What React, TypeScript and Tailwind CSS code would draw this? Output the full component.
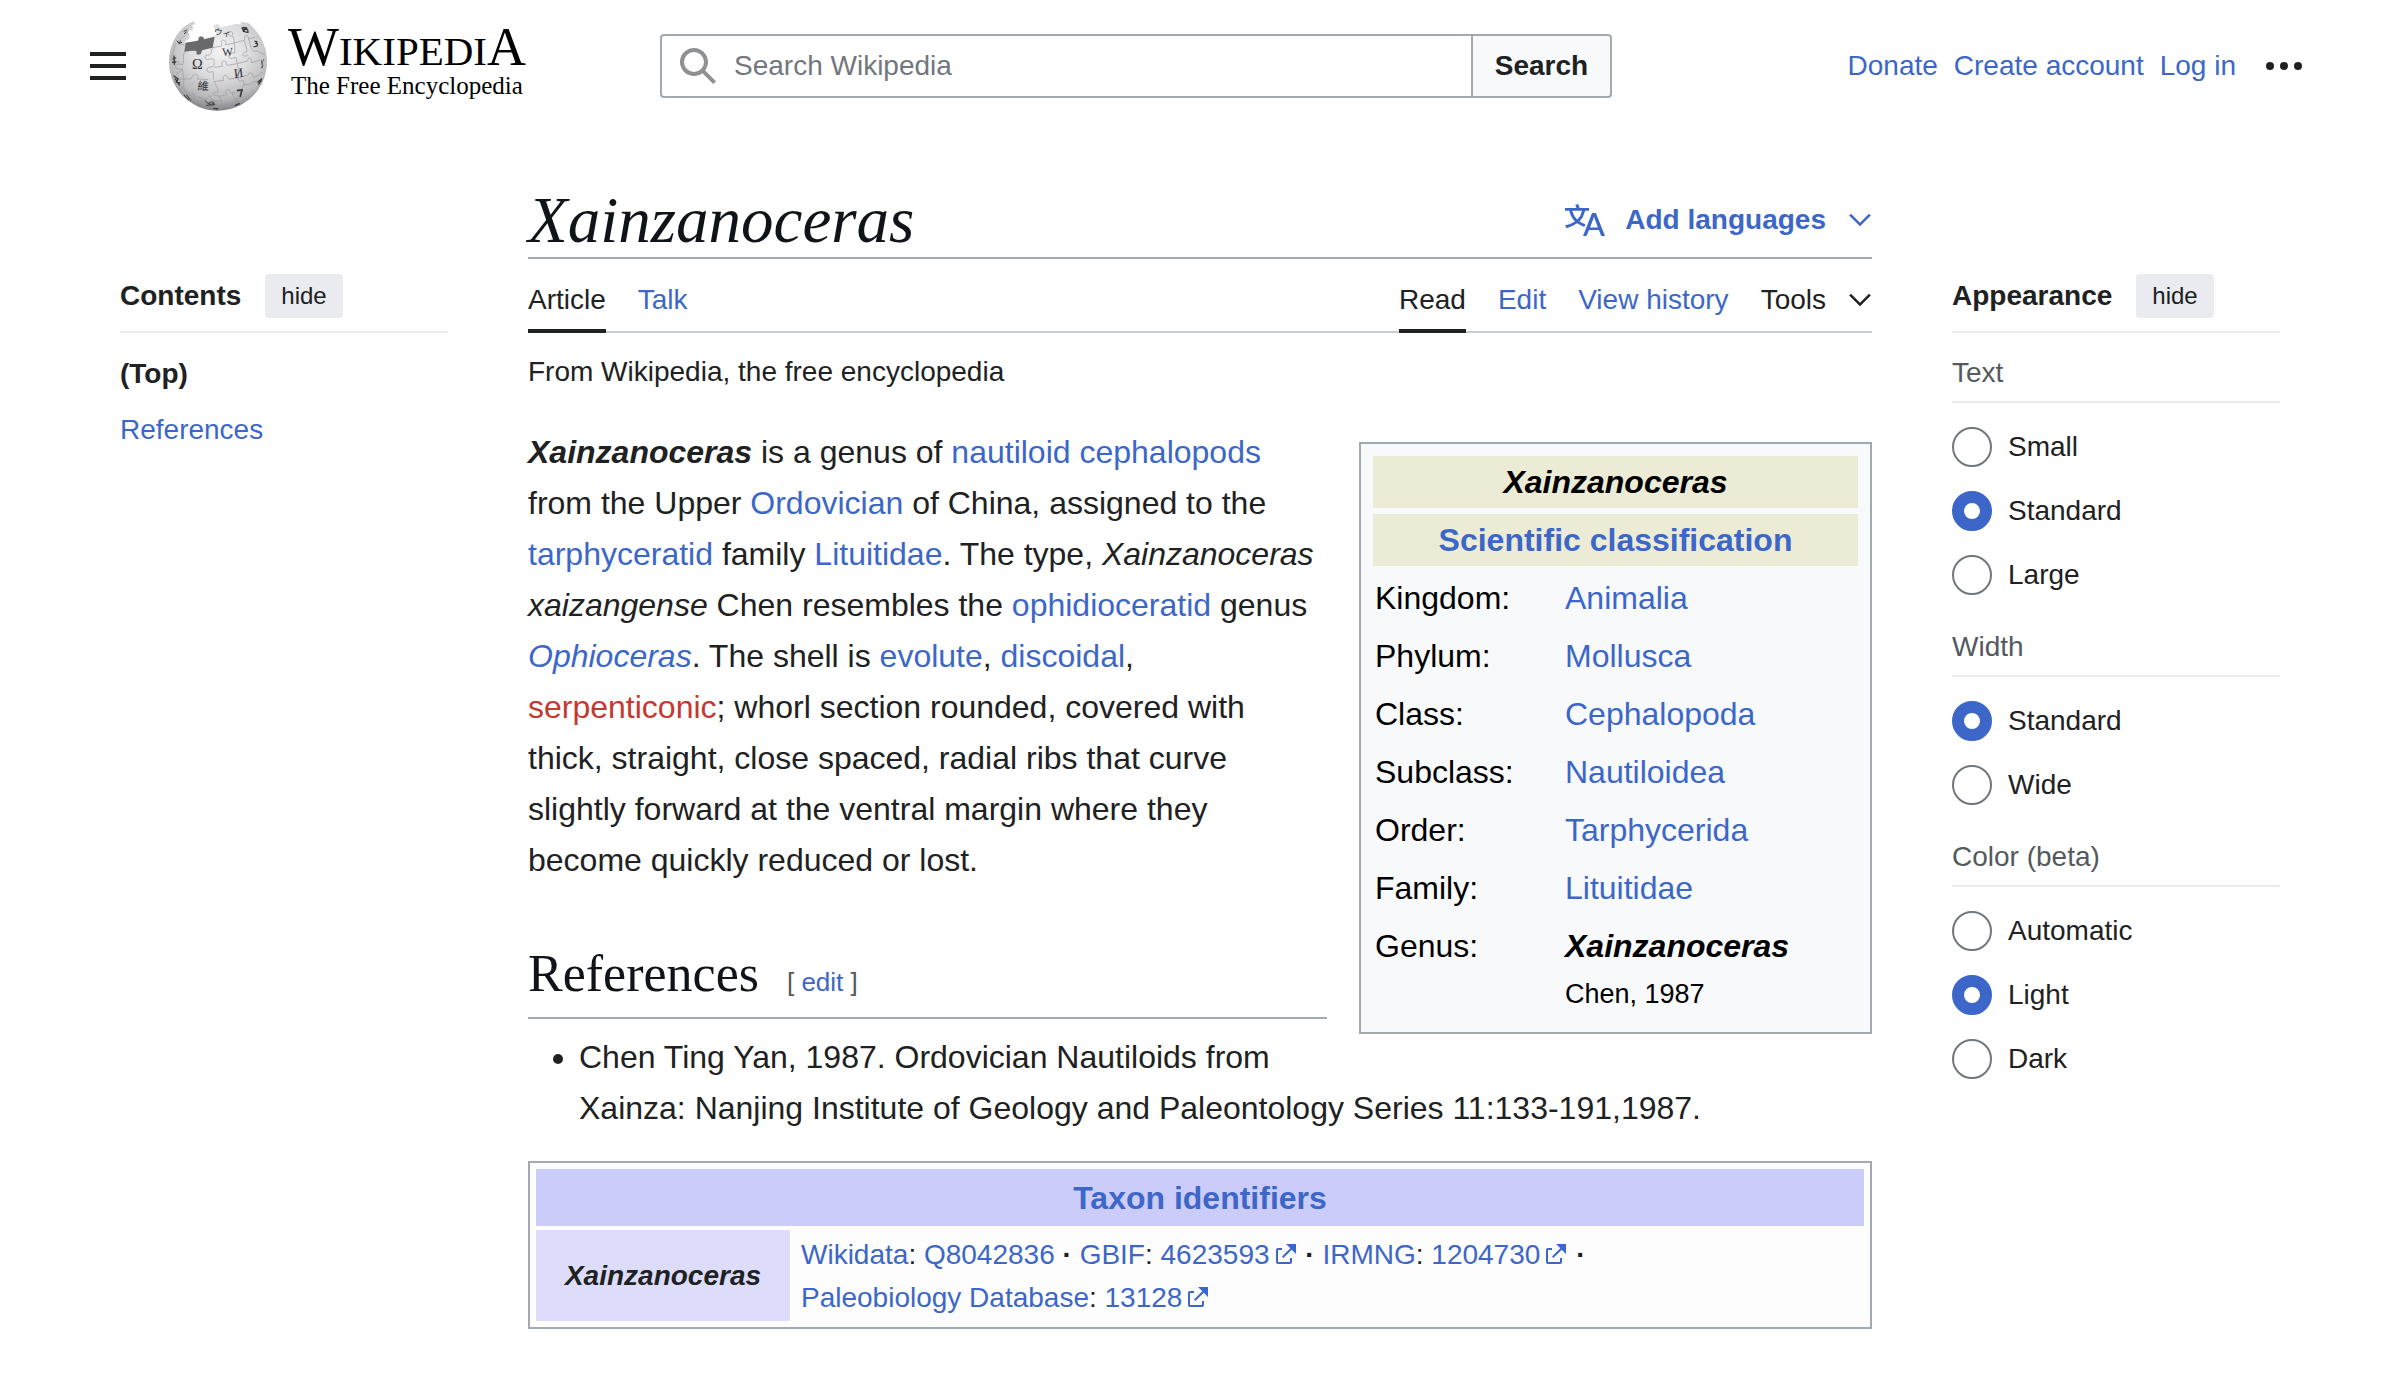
import { useState, type ReactNode } from "react";

const LINK = "text-[#3c67c8] hover:underline";

function A({ children, className = "" }: { children: ReactNode; className?: string }) {
  return (
    <a href="#" className={`${LINK} ${className}`}>
      {children}
    </a>
  );
}

function Chevron() {
  return (
    <svg viewBox="0 0 20 20" className="size-6" fill="currentColor" aria-hidden="true">
      <path d="m17.5 4.75-7.5 7.5-7.5-7.5L1 6.25l9 9 9-9z" />
    </svg>
  );
}

function ExternalLink({ children }: { children: ReactNode }) {
  return (
    <a href="#" className={LINK}>
      {children}
      <svg viewBox="0 0 12 12" className="ml-1 inline size-6 align-[-2px]" fill="currentColor" aria-hidden="true">
        <path d="M6 1h5v5L8.86 3.85 4.7 8 4 7.3l4.15-4.16zM2 3h2v1H2v6h6V8h1v2a1 1 0 0 1-1 1H2a1 1 0 0 1-1-1V4a1 1 0 0 1 1-1" />
      </svg>
    </a>
  );
}

function Globe() {
  return (
    <svg viewBox="24 30 300 273" className="h-[91px] w-[100px]" aria-hidden="true">
      <defs>
        <radialGradient id="globe" cx="0.52" cy="0.32" r="0.68">
          <stop offset="0" stopColor="#f3f3f4" />
          <stop offset="0.45" stopColor="#dcdcde" />
          <stop offset="0.8" stopColor="#b9b9bc" />
          <stop offset="1" stopColor="#828286" />
        </radialGradient>
        <clipPath id="ball">
          <circle cx="174" cy="155" r="147" />
        </clipPath>
      </defs>
      <path
        fill="url(#globe)"
        d="M103 37C97 33 92 40 84 42C48 66 27 108 27 155C27 236 93 302 174 302S321 236 321 155C321 110 301 70 272 46C269 39 262 37 256 39C250 34 243 34 242 42C238 46 233 41 228 42L189 50C184 53 180 53 177 48C178 42 169 41 163 45C158 49 161 54 166 56L168 72L158 82C151 84 145 86 138 90L114 95L74 98C76 90 88 90 89 80C88 70 82 68 86 61C92 58 93 63 97 62L99 52C93 47 99 43 105 44Z"
      />
      <path
        fill="#69696b"
        d="M77 98L112 92C119 90 112 82 120 80C128 78 134 82 131 88L164 80L158 113L129 120C122 122 127 131 120 133C112 136 107 132 110 125C108 120 101 124 95 122L73 125Z"
      />
      <g clipPath="url(#ball)" fill="none" stroke="#9a9a9e" strokeWidth="2">
        <path d="M73 125C68 140 72 152 69 163C60 165 52 158 47 166C43 174 53 180 67 177C69 190 70 200 72 207L91 207C99 205 94 196 103 193C114 192 117 201 111 207L144 209M158 113C153 122 155 130 150 134C143 137 136 132 135 142C137 153 146 147 157 146C163 146 162 155 162 166C156 175 144 167 141 177C140 189 153 188 158 184C162 192 160 200 160 209" />
        <path d="M158 113L183 109C191 105 178 96 187 91C198 89 200 99 196 105L222 99C224 90 220 85 218 78C208 79 203 75 207 68C213 61 221 67 217 75M222 99C225 110 225 118 224 129C213 127 205 133 207 141C211 150 221 143 228 142C230 150 231 157 232 161L203 166C196 166 202 154 193 152C183 153 185 164 188 169L163 172" />
        <path d="M232 161L263 153C262 145 268 142 273 146C276 151 272 154 275 158L300 150M222 99L252 91C257 88 250 80 256 77C263 75 268 82 265 87L285 82M252 91C256 106 261 112 260 125C251 127 246 132 251 138C259 141 261 135 264 134" />
        <path d="M232 161C235 178 237 190 235 204L208 207C201 207 205 197 196 196C187 197 189 208 192 211L160 215M235 204C233 213 240 217 246 211C251 207 253 216 250 226L244 243L216 249C208 250 212 238 203 238C195 239 197 250 201 254L177 259C172 252 166 258 160 255C158 248 167 245 174 246C174 229 167 229 164 215M235 204L265 195C267 186 273 187 277 192C280 197 277 201 281 203L308 188" />
        <path d="M72 207L69 229C76 246 84 251 91 257M72 207L43 210M91 257C96 247 105 251 103 259L137 267C144 267 141 259 148 258C157 260 153 268 158 273L184 272L177 259M184 272C187 286 184 292 182 300M137 267L128 290M250 226C262 221 270 225 275 218C285 211 290 220 302 207M244 243L227 273L216 249M265 87C274 103 270 119 284 124C298 119 300 135 315 131M69 177L47 195M86 61C77 82 59 82 52 99L73 105M46 100C42 124 34 136 33 152L60 156" />
      </g>
      <g fill="#2f2f32" textAnchor="middle" style={{ fontFamily: '"Liberation Serif", "Noto Sans CJK SC", serif' }}>
        <text x="112" y="178" fontSize="43">Ω</text>
        <text x="203" y="137" fontSize="34" transform="rotate(-4 203 125)">W</text>
        <text x="236" y="202" fontSize="39" transform="rotate(-8 236 190)">И</text>
        <text x="129" y="240" fontSize="34" transform="rotate(3 129 228)">維</text>
        <text x="187" y="77" fontSize="26" transform="rotate(8 187 70)">ウィ</text>
      </g>
      <g fill="none" stroke="#3a3a3d" strokeWidth="4" strokeLinecap="round">
        <path d="M233 241L246 240L241 259" strokeWidth="5" />
        <path d="M246 54C256 49 266 59 264 67C257 67 250 64 248 57L262 58M250 64L260 53" />
        <path d="M285 94C294 93 290 101 286 100C296 98 295 111 282 110" />
        <path d="M51 93L57 99L62 92M57 101L65 97M72 64L81 60M73 71L79 66" strokeWidth="3" />
        <path d="M42 138L43 163M39 147L47 144M38 157L47 156" />
        <path d="M42 198L54 207L49 216L59 219M46 207L58 225" />
        <path d="M73 256L86 270M80 255L92 271" strokeWidth="3" />
        <path d="M136 272C143 283 151 285 163 280C159 274 149 275 146 280M140 286L164 284" strokeWidth="3" />
        <path d="M304 151L308 174M311 148L306 161M303 174L310 165" strokeWidth="2" />
        <path d="M294 216L305 207M296 222L304 212M162 295L173 297M226 286L238 281" />
      </g>
    </svg>
  );
}

function Header() {
  return (
    <header className="flex h-[132px] items-center pr-[97px] pl-[90px]">
      <div className="flex w-[570px] shrink-0 items-center">
        <button type="button" aria-label="Main menu" className="mr-[42px]">
          <svg viewBox="0 0 36 28" className="h-7 w-9" fill="#202122" aria-hidden="true">
            <path d="M0 0h36v4H0zM0 12h36v4H0zM0 24h36v4H0z" />
          </svg>
        </button>
        <a href="#" aria-label="Wikipedia, The Free Encyclopedia" className="flex items-center gap-5 pb-0.5 text-black">
          <Globe />
          <span className="block font-['Liberation_Serif',serif]">
            <span className="block text-[41px] leading-[38px]">
              <span className="text-[54px]">W</span>IKIPEDI<span className="text-[54px]">A</span>
            </span>
            <span className="block pl-[3px] text-[25px] leading-8">The Free Encyclopedia</span>
          </span>
        </a>
      </div>
      <form role="search" className="flex h-16 max-w-[952px] flex-1" onSubmit={(e) => e.preventDefault()}>
        <label className="-mr-0.5 flex flex-1 items-center rounded-l-[4px] border-2 border-[#a2a9b1] bg-white pl-4">
          <svg viewBox="0 0 20 20" className="size-10" fill="#8f9091" aria-hidden="true">
            <path d="M12.2 13.6a7 7 0 1 1 1.4-1.4l5.4 5.4-1.4 1.4zM3 8a5 5 0 1 0 10 0A5 5 0 0 0 3 8" />
          </svg>
          <input
            type="search"
            aria-label="Search Wikipedia"
            placeholder="Search Wikipedia"
            className="ml-4 h-full min-w-0 flex-1 bg-transparent outline-none placeholder:text-[#72777d]"
          />
        </label>
        <button type="submit" className="w-[141px] rounded-r-[4px] border-2 border-[#a2a9b1] bg-[#f8f9fb] font-bold">
          Search
        </button>
      </form>
      <nav aria-label="Personal tools" className="ml-auto flex shrink-0 items-center gap-4">
        <A>Donate</A>
        <A>Create account</A>
        <A>Log in</A>
        <button type="button" aria-label="Personal tools" className="ml-[13px]">
          <svg viewBox="0 0 38 10" className="h-2.5 w-[38px]" fill="#202122" aria-hidden="true">
            <circle cx="5" cy="5" r="4" />
            <circle cx="19" cy="5" r="4" />
            <circle cx="33" cy="5" r="4" />
          </svg>
        </button>
      </nav>
    </header>
  );
}

function PanelHeading({ children }: { children: ReactNode }) {
  return (
    <div className="flex items-center gap-6 border-b-2 border-[#eaecf0] pb-[13px]">
      <h2 className="font-bold">{children}</h2>
      <button type="button" className="h-11 rounded-[4px] bg-[#eaebf0] px-4 text-2xl">
        hide
      </button>
    </div>
  );
}

function RadioGroup({ title, options, initial }: { title: string; options: string[]; initial: string }) {
  const [value, setValue] = useState(initial);
  return (
    <fieldset className="mb-2">
      <legend className="mb-6 w-full border-b-2 border-[#eaecf0] pb-2 text-[#54595d]">{title}</legend>
      {options.map((o) => (
        <label key={o} className="mb-6 flex items-center gap-4">
          <input
            type="radio"
            name={title}
            checked={value === o}
            onChange={() => setValue(o)}
            className="size-10 appearance-none rounded-full border-2 border-[#72777d] bg-white checked:border-12 checked:border-[#3c67c8]"
          />
          {o}
        </label>
      ))}
    </fieldset>
  );
}

const RANKS = [
  ["Kingdom:", "Animalia"],
  ["Phylum:", "Mollusca"],
  ["Class:", "Cephalopoda"],
  ["Subclass:", "Nautiloidea"],
  ["Order:", "Tarphycerida"],
  ["Family:", "Lituitidae"],
];

function Infobox() {
  return (
    <table className="float-right mt-[15px] mb-4 ml-8 w-[513px] border-separate border-spacing-1.5 border-2 border-[#a2a9b1] bg-[#f8f9fb] px-1.5 py-1.5 leading-[48px] text-black">
      <tbody>
        <tr>
          <th colSpan={2} className="bg-[#ebebd6] p-0.5 text-center">
            <i>Xainzanoceras</i>
          </th>
        </tr>
        <tr>
          <th colSpan={2} className="bg-[#ebebd6] p-0.5 text-center">
            <A>Scientific classification</A>
          </th>
        </tr>
        {RANKS.map(([rank, name]) => (
          <tr key={rank}>
            <td className="w-[184px] p-0.5">{rank}</td>
            <td className="p-0.5">
              <A>{name}</A>
            </td>
          </tr>
        ))}
        <tr>
          <td className="p-0.5 align-top">Genus:</td>
          <td className="p-0.5">
            <b>
              <i>Xainzanoceras</i>
            </b>
            <div className="text-[27px]">Chen, 1987</div>
          </td>
        </tr>
      </tbody>
    </table>
  );
}

function TaxonIdentifiers() {
  return (
    <table className="mt-[27px] w-full border-separate border-spacing-1 border-2 border-[#a2a9b1] bg-[#fdfdfd] p-0.5 text-[28px]">
      <tbody>
        <tr>
          <th colSpan={2} className="h-[57px] bg-[#ccccfa] text-center text-[32px] leading-[48px]">
            <A>Taxon identifiers</A>
          </th>
        </tr>
        <tr>
          <th className="w-[254px] bg-[#ddddfb] text-center">
            <i>Xainzanoceras</i>
          </th>
          <td className="px-[7px] pt-[3px] pb-0.5 leading-[43px]">
            <span className="whitespace-nowrap">
              <A>Wikidata</A>: <A>Q8042836</A> <b>·</b>
            </span>{" "}
            <span className="whitespace-nowrap">
              <A>GBIF</A>: <ExternalLink>4623593</ExternalLink> <b>·</b>
            </span>{" "}
            <span className="whitespace-nowrap">
              <A>IRMNG</A>: <ExternalLink>1204730</ExternalLink> <b>·</b>
            </span>{" "}
            <span className="whitespace-nowrap">
              <A>Paleobiology Database</A>: <ExternalLink>13128</ExternalLink>
            </span>
          </td>
        </tr>
      </tbody>
    </table>
  );
}

function Article() {
  const tab = "-mb-0.5 border-b-4 pt-[21px] pb-[9px]";
  return (
    <main className="pt-[52px]">
      <div className="flex justify-between border-b-2 border-[#a2a9b1] pb-px">
        <h1 className="font-['Liberation_Serif',serif] text-[65px] leading-[72px] text-[#101418] italic">Xainzanoceras</h1>
        <button type="button" className="flex items-center font-bold text-[#3c67c8]">
          <svg viewBox="0 0 20 20" className="mr-5 size-10" fill="currentColor" aria-hidden="true">
            <path d="M20 18h-1.44a.6.6 0 0 1-.4-.12.8.8 0 0 1-.23-.31L17 15h-5l-1 2.54a.8.8 0 0 1-.22.3.6.6 0 0 1-.4.14H9l4.55-11.47h1.89zm-3.53-4.31L14.89 9.5a12 12 0 0 1-.39-1.24q-.09.37-.19.69l-.19.56-1.58 4.19zm-6.3-1.58a13.4 13.4 0 0 1-2.91-1.41 11.46 11.46 0 0 0 2.81-5.37H12V4H7.31a4 4 0 0 0-.2-.56C6.87 2.79 6.6 2 6.6 2l-1.47.5s.4.89.6 1.5H0v1.33h2.15A11.23 11.23 0 0 0 5 10.7a17.2 17.2 0 0 1-5 2.1q.56.82.87 1.38a23.3 23.3 0 0 0 5.22-2.51 15.6 15.6 0 0 0 3.56 1.77zM3.63 5.33h4.91a8.1 8.1 0 0 1-2.45 4.45 9.1 9.1 0 0 1-2.46-4.45" />
          </svg>
          <span className="mr-[22px]">Add languages</span>
          <Chevron />
        </button>
      </div>
      <nav aria-label="Page" className="flex gap-8 border-b-2 border-[#c8ccd1]">
        <a href="#" className={`${tab} border-[#202122]`}>
          Article
        </a>
        <a href="#" className={`${tab} mr-auto border-transparent text-[#3c67c8]`}>
          Talk
        </a>
        <a href="#" className={`${tab} border-[#202122]`}>
          Read
        </a>
        <a href="#" className={`${tab} border-transparent text-[#3c67c8]`}>
          Edit
        </a>
        <a href="#" className={`${tab} border-transparent text-[#3c67c8]`}>
          View history
        </a>
        <button type="button" className={`${tab} flex items-center gap-[22px] border-transparent`}>
          Tools
          <Chevron />
        </button>
      </nav>
      <p className="mt-[19px]">From Wikipedia, the free encyclopedia</p>
      <div className="mt-[35px] text-[32px] leading-[51px]">
        <Infobox />
        <p>
          <b>
            <i>Xainzanoceras</i>
          </b>{" "}
          is a genus of <A>nautiloid</A> <A>cephalopods</A> from the Upper <A>Ordovician</A> of China, assigned to the{" "}
          <A>tarphyceratid</A> family <A>Lituitidae</A>. The type, <i>Xainzanoceras xaizangense</i> Chen resembles the{" "}
          <A>ophidioceratid</A> genus <A className="italic">Ophioceras</A>. The shell is <A>evolute</A>, <A>discoidal</A>,{" "}
          <a href="#" className="text-[#c4392f] hover:underline">
            serpenticonic
          </a>
          ; whorl section rounded, covered with thick, straight, close spaced, radial ribs that curve slightly forward at
          the ventral margin where they become quickly reduced or lost.
        </p>
        <div className="mt-14 flex items-baseline gap-7 border-b-2 border-[#a2a9b1] pb-[11px]">
          <h2 className="font-['Liberation_Serif',serif] text-[52px] leading-[64px] text-[#101418]">References</h2>
          <span className="text-[26px] leading-10 text-[#54595d]">
            [ <A>edit</A> ]
          </span>
        </div>
        <ul className="mt-[13px] list-disc pl-[51px]">
          <li>
            Chen Ting Yan, 1987. Ordovician Nautiloids from Xainza: Nanjing Institute of Geology and Paleontology Series
            11:133-191,1987.
          </li>
        </ul>
      </div>
      <TaxonIdentifiers />
    </main>
  );
}

export default function App() {
  return (
    <div className="min-h-screen bg-white font-['Liberation_Sans',Arial,sans-serif] text-[28px] leading-10 text-[#202122]">
      <Header />
      <div className="grid grid-cols-[328px_minmax(0,1fr)_328px] gap-20 px-[120px] pb-12">
        <nav aria-label="Contents" className="pt-[142px]">
          <PanelHeading>Contents</PanelHeading>
          <ul className="mt-[21px] space-y-4">
            <li>
              <a href="#" className="font-bold">
                (Top)
              </a>
            </li>
            <li>
              <A>References</A>
            </li>
          </ul>
        </nav>
        <Article />
        <aside aria-label="Appearance" className="pt-[142px]">
          <PanelHeading>Appearance</PanelHeading>
          <div className="mt-5">
            <RadioGroup title="Text" options={["Small", "Standard", "Large"]} initial="Standard" />
            <RadioGroup title="Width" options={["Standard", "Wide"]} initial="Standard" />
            <RadioGroup title="Color (beta)" options={["Automatic", "Light", "Dark"]} initial="Light" />
          </div>
        </aside>
      </div>
    </div>
  );
}
